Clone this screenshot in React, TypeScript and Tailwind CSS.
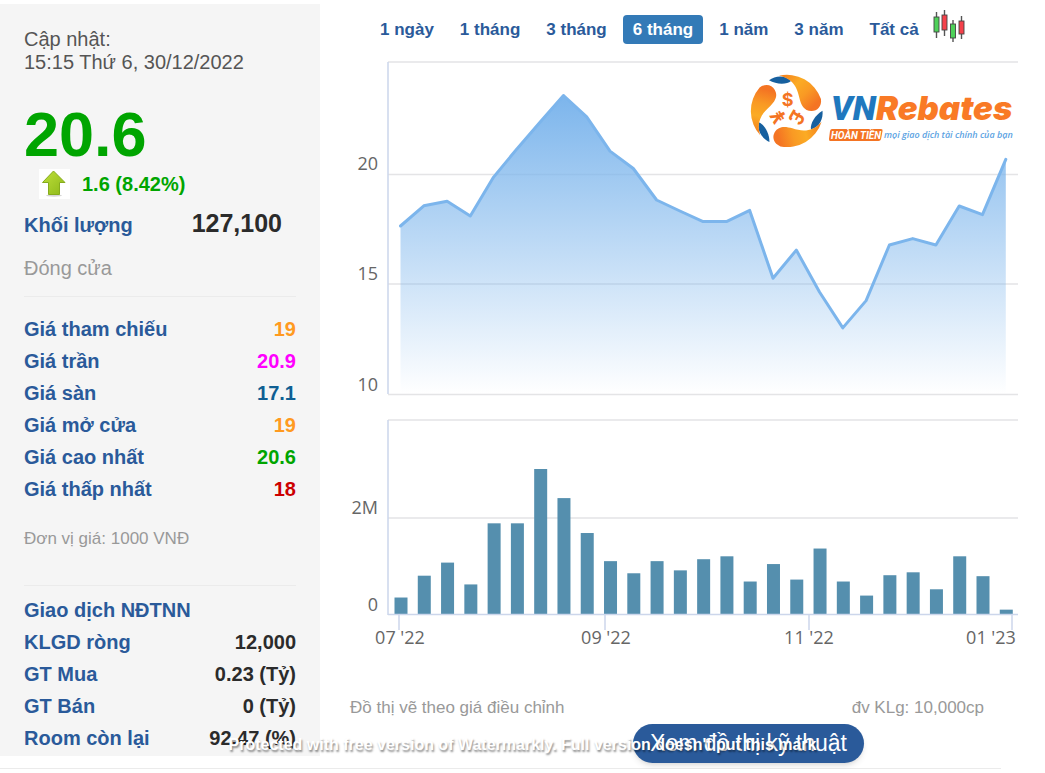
import clsx from "clsx"
import { useState } from "react"

const ranges = ["1 ngày", "1 tháng", "3 tháng", "6 tháng", "1 năm", "3 năm", "Tất cả"]

const quotes = [
  { label: "Giá tham chiếu", value: "19", color: "text-[#ff9a1f]" },
  { label: "Giá trần", value: "20.9", color: "text-[#ff00ff]" },
  { label: "Giá sàn", value: "17.1", color: "text-[#0f5f93]" },
  { label: "Giá mở cửa", value: "19", color: "text-[#ff9a1f]" },
  { label: "Giá cao nhất", value: "20.6", color: "text-[#00a500]" },
  { label: "Giá thấp nhất", value: "18", color: "text-[#cc0000]" },
]

const foreign = [
  { label: "KLGD ròng", value: "12,000", color: "text-[#2b2b2b]" },
  { label: "GT Mua", value: "0.23 (Tỷ)", color: "text-[#2b2b2b]" },
  { label: "GT Bán", value: "0 (Tỷ)", color: "text-[#2b2b2b]" },
  { label: "Room còn lại", value: "92.47 (%)", color: "text-[#2b2b2b]" },
]

const prices = [
  17.64, 18.56, 18.76, 18.1, 19.86, 21.14, 22.36, 23.56, 22.59, 21.04, 20.25, 18.82, 18.32, 17.84,
  17.84, 18.35, 15.27, 16.55, 14.65, 13.02, 14.26, 16.78, 17.07, 16.78, 18.55, 18.16, 20.66,
]

// in millions
const volumes = [
  0.35, 0.8, 1.07, 0.62, 1.88, 1.88, 3.0, 2.4, 1.68, 1.1, 0.85, 1.1, 0.91, 1.14, 1.2, 0.68, 1.04,
  0.72, 1.36, 0.68, 0.39, 0.81, 0.87, 0.52, 1.2, 0.79, 0.1,
]

const xTicks = [
  { x: 59, label: "07 '22", at: 60 },
  { x: 265, label: "09 '22", at: 266 },
  { x: 469, label: "11 '22", at: 469 },
  { x: 672, label: "01 '23", at: 651 },
]

const STEP = 23.28
const px = (i: number) => 60.5 + i * STEP
const py = (p: number) => 339.5 - (p - 10) * 22.05
const vh = (v: number) => v * 48.5

type Row = { label: string; value: string; color: string }

function Rows({ rows, title }: { rows: Row[]; title?: string }) {
  return (
    <table className="w-full font-bold text-[20px] leading-8">
      {title && (
        <thead>
          <tr>
            <th colSpan={2} className="p-0 text-left text-[#2a5a9a]">{title}</th>
          </tr>
        </thead>
      )}
      <tbody>
        {rows.map((row) => (
          <tr key={row.label}>
            <th scope="row" className="p-0 text-left text-[#2a5a9a]">{row.label}</th>
            <td className={clsx("p-0 text-right", row.color)}>{row.value}</td>
          </tr>
        ))}
      </tbody>
    </table>
  )
}

function UpArrow() {
  return (
    <svg width="31" height="30" viewBox="0 0 31 30" className="bg-white" aria-hidden="true">
      <defs>
        <linearGradient id="up" x1="0" y1="0" x2="1" y2="1">
          <stop offset="0" stopColor="#bfe03a" />
          <stop offset="1" stopColor="#8db81a" />
        </linearGradient>
      </defs>
      <ellipse cx="15" cy="26.5" rx="8" ry="1.2" fill="#d5d5d5" />
      <path d="M14.5 2 L26 13.5 H20.5 V25.5 H9.5 V13.5 H3.5 Z" fill="url(#up)" stroke="#86ac1c" strokeLinejoin="round" />
    </svg>
  )
}

function Candles() {
  const bars = [
    { x: 1, top: 2, end: 28, y: 7, h: 15, fill: "#4fd15a" },
    { x: 9, top: 0, end: 26, y: 5, h: 15, fill: "#f5414b" },
    { x: 17.5, top: 10, end: 32, y: 14, h: 14, fill: "#4fd15a" },
    { x: 26, top: 6, end: 29, y: 11, h: 13, fill: "#f5414b" },
  ]
  return (
    <svg width="33" height="32" viewBox="0 0 33 32" aria-hidden="true">
      {bars.map((b) => (
        <g key={b.x}>
          <path d={`M${b.x + 2.5} ${b.top}V${b.end}`} stroke="#555" strokeWidth="1.4" />
          <rect x={b.x} y={b.y} width="5" height={b.h} fill={b.fill} stroke="#444" strokeWidth="0.9" />
        </g>
      ))}
    </svg>
  )
}

function Logo() {
  return (
    <g>
      <defs>
        <linearGradient id="petal" gradientUnits="userSpaceOnUse" x1="-10" y1="-105" x2="80" y2="-15">
          <stop offset="0" stopColor="#f5851f" />
          <stop offset="0.35" stopColor="#fbab24" />
          <stop offset="0.65" stopColor="#f99a24" />
          <stop offset="1" stopColor="#f47423" />
        </linearGradient>
      </defs>
      <g transform="translate(447 56) scale(0.333)">
        {[0, 120, 240].map((deg) => (
          <g key={deg} transform={`rotate(${deg})`}>
            <path d="M-54 -92 C-36 -105 -8 -110 12 -90 C0 -79 -32 -79 -54 -92Z" fill="#17609f" />
            <path
              d="M-24 -106 A108 108 0 0 1 102 -36 C105 -14 91 0 74 0 C50 0 42 -20 37 -40 C31 -70 18 -98 -24 -106Z"
              fill="url(#petal)"
            />
          </g>
        ))}
        <g fill="#f47423" fontFamily="Inter, sans-serif" fontWeight="700" fontSize="54" textAnchor="middle">
          <text transform="translate(2 -34)" y="18">$</text>
          <text transform="translate(29 19) rotate(120)" y="20" fontSize="60">£</text>
          <text transform="translate(-25 16) rotate(240)" y="20" fontSize="60">¥</text>
        </g>
      </g>
      <g fontWeight="900" fontStyle="italic">
        <text x="491" y="65" fontFamily="Roboto, sans-serif" fontSize="34" fill="#1f78be">VN</text>
        <text x="536" y="65" fontFamily="Inter, sans-serif" fontSize="33" fill="#f97a26">Rebates</text>
      </g>
      <path d="M492 74 H541 Q543 74 542.500 76 L541 84 Q540.500 86 538.500 86 H490 Q489 86 489 84 L490 76 Q490.500 74 492 74Z" fill="#f47423" />
      <g fontStyle="italic">
        <text x="491" y="84" fontFamily="Roboto, sans-serif" fontSize="10" fontWeight="700" fill="#fff">HOÀN TIỀN</text>
        <text x="544" y="83" fontFamily="'Open Sans', sans-serif" fontSize="9" fontWeight="600" fill="#5aa2e2">
          mọi giao dịch tài chính của bạn
        </text>
      </g>
    </g>
  )
}

function Chart() {
  const line = prices.map((p, i) => `${px(i).toFixed(1)},${py(p).toFixed(1)}`).join(" ")
  const area = `${px(0)},339 ${line} ${px(prices.length - 1)},339`

  return (
    <svg viewBox="0 0 678 600" className="block w-full" role="img" aria-label="Đồ thị giá 6 tháng">
      <defs>
        <linearGradient id="area" x1="0" y1="0" x2="0" y2="1">
          <stop offset="0" stopColor="#7cb5ec" />
          <stop offset="1" stopColor="#7cb5ec" stopOpacity="0" />
        </linearGradient>
      </defs>

      {/* Grid */}
      <path
        d="M48 7H678 M48 119.500H678 M48 229H678 M48 339.500H678 M48 365H678 M48 463H678"
        stroke="#e4e4e6"
        strokeWidth="1.500"
      />

      {/* Price */}
      <polygon points={area} fill="url(#area)" />
      <polyline points={line} fill="none" stroke="#7cb5ec" strokeWidth="3" strokeLinejoin="round" strokeLinecap="round" />

      {/* Volume */}
      {volumes.map((v, i) => (
        <rect key={i} x={px(i) - 6} y={559.5 - vh(v)} width="13" height={vh(v)} fill="#558fae" />
      ))}

      {/* Axes */}
      <path d="M48 7V339 M48 365V560 M48 559.500H678" stroke="#ccd6eb" strokeWidth="1.500" fill="none" />
      {xTicks.map((t) => (
        <path key={t.label} d={`M${t.x} 560V575`} stroke="#ccd6eb" strokeWidth="1.500" />
      ))}

      <g fontFamily="'Open Sans', sans-serif" fontSize="18" fill="#666">
        <g textAnchor="end">
          <text x="38" y="115">20</text>
          <text x="38" y="225">15</text>
          <text x="38" y="336">10</text>
          <text x="38" y="459">2M</text>
          <text x="38" y="556">0</text>
        </g>
        <g textAnchor="middle">
          {xTicks.map((t) => (
            <text key={t.label} x={t.at} y="589">{t.label}</text>
          ))}
        </g>
      </g>

      <Logo />
    </svg>
  )
}

export default function App() {
  const [range, setRange] = useState("6 tháng")

  return (
    <div className="relative bg-white pt-1 font-['Liberation_Sans',Arial,sans-serif]">
      <div className="flex items-start">
        {/* Quote panel */}
        <aside className="w-80 shrink-0 bg-[#f5f5f5] pl-6 pr-6 pt-6 pb-0.5">
          <p className="text-[20px] leading-[23px] text-[#555]">
            Cập nhật:
            <br />
            15:15 Thứ 6, 30/12/2022
          </p>
          <p className="mt-7 text-[63px] leading-16 font-bold text-[#00a500]">20.6</p>
          <div className="mt-[3px] flex items-center gap-3 pl-[15px] text-[20px] leading-none font-bold text-[#00a500]">
            <UpArrow />
            <span>1.6 (8.42%)</span>
          </div>
          <div className="mt-2 flex items-baseline justify-between pr-3.5 font-bold leading-8">
            <span className="text-[20px] text-[#2a5a9a]">Khối lượng</span>
            <span className="text-[25px] text-[#2b2b2b]">127,100</span>
          </div>
          <p className="mt-[11px] pb-3 text-[20px] leading-8 text-[#999]">Đóng cửa</p>
          <div className="border-t border-[#ebebeb] pt-4">
            <Rows rows={quotes} />
          </div>
          <p className="mt-5 pb-8 text-[17px] leading-7 text-[#999]">Đơn vị giá: 1000 VNĐ</p>
          <div className="border-t border-[#ebebeb] pt-2">
            <Rows title="Giao dịch NĐTNN" rows={foreign} />
          </div>
        </aside>

        {/* Chart panel */}
        <main className="min-w-0 flex-1 pl-5 pr-[27px]">
          <div className="flex h-[51px] items-start pl-[30px] pt-1.5">
            <div className="flex gap-1.5 pt-[5px]">
              {ranges.map((r) => (
                <button
                  key={r}
                  onClick={() => setRange(r)}
                  className={clsx(
                    "rounded px-2.5 text-[17px] leading-[29px] font-bold whitespace-nowrap",
                    r === range ? "bg-[#337ab7] text-white" : "text-[#2a5a9a]",
                  )}
                >
                  {r}
                </button>
              ))}
            </div>
            <button aria-label="Biểu đồ nến" className="ml-1">
              <Candles />
            </button>
          </div>

          <Chart />

          <div className="mt-[41px] flex justify-between pl-2.5 pr-[34px] text-[17px] leading-6 text-[#999]">
            <span>Đồ thị vẽ theo giá điều chỉnh</span>
            <span>đv KLg: 10,000cp</span>
          </div>
          <div className="mt-1 flex justify-end pr-[154px]">
            <a
              href="#chart"
              className="rounded-full bg-[#2a5a9a] px-[17px] text-[23px] leading-[39px] whitespace-nowrap text-white shadow-md"
            >
              Xem đồ thị kỹ thuật
            </a>
          </div>
        </main>
      </div>

      <div className="mt-[5px] mr-11 border-t border-[#ebebeb]" />

      <p className="pointer-events-none absolute inset-x-0 bottom-3 text-center text-[16px] leading-6 font-bold whitespace-nowrap text-white [text-shadow:1px_2px_2px_rgba(0,0,0,0.45)]">
        Protected with free version of Watermarkly. Full version doesn't put this mark
      </p>
    </div>
  )
}
